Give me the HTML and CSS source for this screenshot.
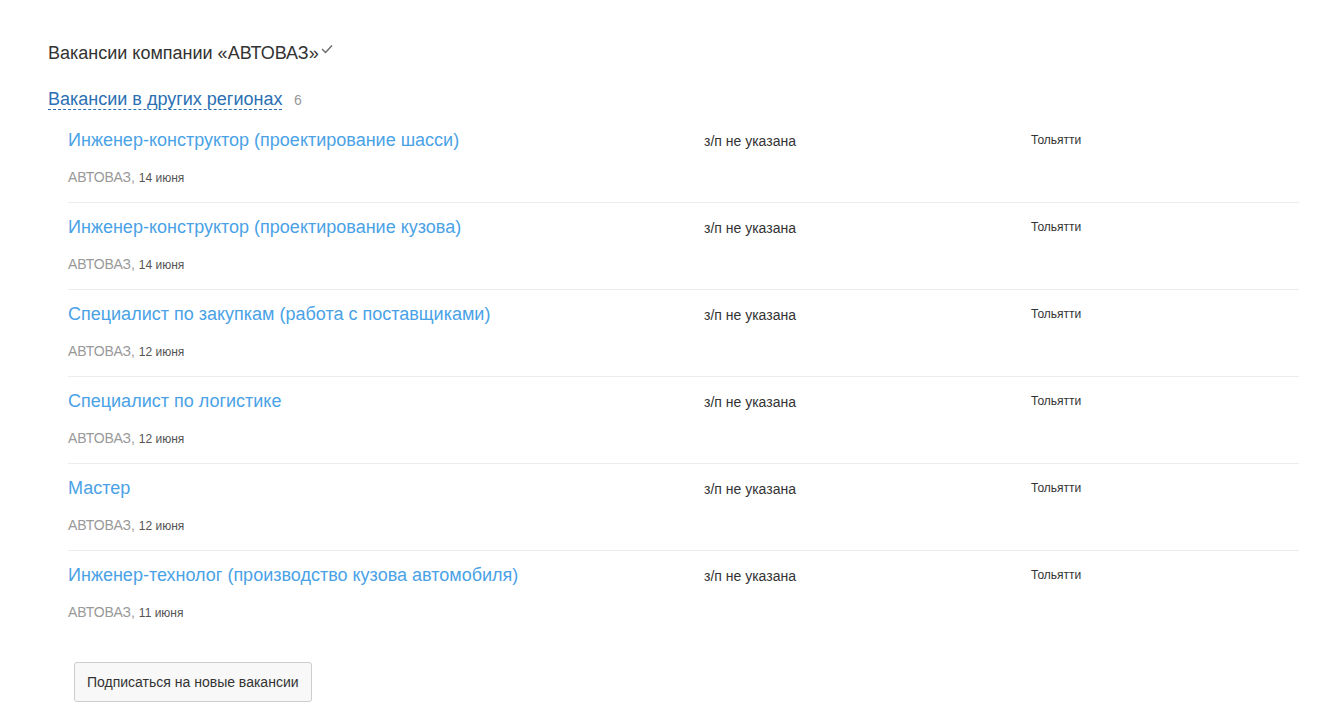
FILE: index.html
```html
<!DOCTYPE html>
<html lang="ru">
  <head>
    <meta charset="UTF-8" />
    <meta name="viewport" content="width=device-width, initial-scale=1.0" />
    <title>Вакансии компании «АВТОВАЗ»</title>
    <link rel="stylesheet" href="styles.css">
  </head>
  <body>
    <div class="page">
      <h2 class="company-title">
        Вакансии компании «АВТОВАЗ»<svg class="check" width="12" height="10" viewBox="0 0 12 10" fill="none" stroke="#666" stroke-width="1.3"><polyline points="1 5 4.5 8.5 11 1.5"></polyline></svg>
      </h2>

      <div class="regions">
        <a class="regions-link" href="#">Вакансии в других регионах</a>
        <span class="regions-count">6</span>
      </div>

      <div class="vacancy-list">
        <div class="vacancy">
          <div class="vacancy-main">
            <a class="vacancy-title" href="#">Инженер-конструктор (проектирование шасси)</a>
            <div class="vacancy-meta"><span class="employer">АВТОВАЗ</span>, <span class="date">14 июня</span></div>
          </div>
          <div class="vacancy-salary">з/п не указана</div>
          <div class="vacancy-city">Тольятти</div>
        </div>
        <div class="vacancy">
          <div class="vacancy-main">
            <a class="vacancy-title" href="#">Инженер-конструктор (проектирование кузова)</a>
            <div class="vacancy-meta"><span class="employer">АВТОВАЗ</span>, <span class="date">14 июня</span></div>
          </div>
          <div class="vacancy-salary">з/п не указана</div>
          <div class="vacancy-city">Тольятти</div>
        </div>
        <div class="vacancy">
          <div class="vacancy-main">
            <a class="vacancy-title" href="#">Специалист по закупкам (работа с поставщиками)</a>
            <div class="vacancy-meta"><span class="employer">АВТОВАЗ</span>, <span class="date">12 июня</span></div>
          </div>
          <div class="vacancy-salary">з/п не указана</div>
          <div class="vacancy-city">Тольятти</div>
        </div>
        <div class="vacancy">
          <div class="vacancy-main">
            <a class="vacancy-title" href="#">Специалист по логистике</a>
            <div class="vacancy-meta"><span class="employer">АВТОВАЗ</span>, <span class="date">12 июня</span></div>
          </div>
          <div class="vacancy-salary">з/п не указана</div>
          <div class="vacancy-city">Тольятти</div>
        </div>
        <div class="vacancy">
          <div class="vacancy-main">
            <a class="vacancy-title" href="#">Мастер</a>
            <div class="vacancy-meta"><span class="employer">АВТОВАЗ</span>, <span class="date">12 июня</span></div>
          </div>
          <div class="vacancy-salary">з/п не указана</div>
          <div class="vacancy-city">Тольятти</div>
        </div>
        <div class="vacancy">
          <div class="vacancy-main">
            <a class="vacancy-title" href="#">Инженер-технолог (производство кузова автомобиля)</a>
            <div class="vacancy-meta"><span class="employer">АВТОВАЗ</span>, <span class="date">11 июня</span></div>
          </div>
          <div class="vacancy-salary">з/п не указана</div>
          <div class="vacancy-city">Тольятти</div>
        </div>
      </div>

      <button class="subscribe" type="button">Подписаться на новые вакансии</button>
    </div>
  </body>
</html>
```

FILE: styles.css
```css
body {
  font-family: "Liberation Sans", Arial, sans-serif;
  margin: 0;
  padding: 0;
  background: #fff;
  color: #333;
}
.page {
  padding: 40px 40px 0 48px;
}
.company-title {
  margin: 0;
  font-size: 18px;
  font-weight: normal;
  line-height: 26px;
  color: #333;
}
.check {
  margin-left: 2px;
  vertical-align: 5px;
}
.regions {
  margin-top: 21px;
  line-height: 24px;
}
.regions-link {
  font-size: 18px;
  color: #2b70b3;
  text-decoration: none;
  border-bottom: 1px dashed #2b70b3;
}
.regions-count {
  margin-left: 7px;
  font-size: 14px;
  color: #999;
}
.vacancy-list {
  margin: 4px 0 0 20px;
}
.vacancy {
  display: grid;
  grid-template-columns: 636px 327px 1fr;
  height: 86px;
  border-bottom: 1px solid #ececec;
}
.vacancy:last-child {
  border-bottom: none;
}
.vacancy-main {
  padding-top: 12px;
}
.vacancy-title {
  display: block;
  font-size: 18px;
  line-height: 24px;
  color: #4aa2e6;
  text-decoration: none;
}
.vacancy-meta {
  margin-top: 17px;
  font-size: 14px;
  line-height: 16px;
  color: #999;
}
.date {
  font-size: 12px;
  color: #555;
}
.vacancy-salary {
  padding-top: 16px;
  font-size: 14px;
  line-height: 18px;
  color: #333;
}
.vacancy-city {
  padding-top: 16px;
  font-size: 12px;
  line-height: 16px;
  color: #333;
}
.subscribe {
  margin: 25px 0 0 26px;
  height: 40px;
  padding: 0 12px;
  font-family: inherit;
  font-size: 14px;
  color: #333;
  background: #f8f8f8;
  border: 1px solid #ccc;
  border-radius: 3px;
}
```
